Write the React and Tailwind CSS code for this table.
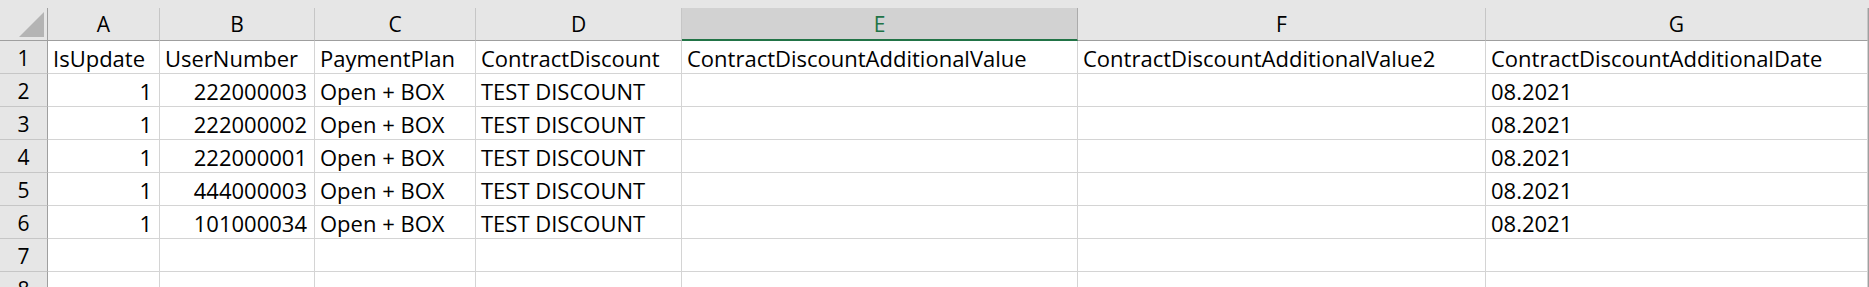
import React from 'react'
import clsx from 'clsx'

const COLS = ['A', 'B', 'C', 'D', 'E', 'F', 'G']
const SELECTED = 'E'

const ROWS = [
  ['IsUpdate', 'UserNumber', 'PaymentPlan', 'ContractDiscount', 'ContractDiscountAdditionalValue', 'ContractDiscountAdditionalValue2', 'ContractDiscountAdditionalDate'],
  [1, 222000003, 'Open + BOX', 'TEST DISCOUNT', '', '', '08.2021'],
  [1, 222000002, 'Open + BOX', 'TEST DISCOUNT', '', '', '08.2021'],
  [1, 222000001, 'Open + BOX', 'TEST DISCOUNT', '', '', '08.2021'],
  [1, 444000003, 'Open + BOX', 'TEST DISCOUNT', '', '', '08.2021'],
  [1, 101000034, 'Open + BOX', 'TEST DISCOUNT', '', '', '08.2021'],
  ['', '', '', '', '', '', ''],
  ['', '', '', '', '', '', ''],
]

const FONT = 'font-["Open_Sans",sans-serif]'

function Corner() {
  return (
    <div className="h-[33px] bg-[#e6e6e6] border-r border-b border-[#9f9f9f] flex items-end justify-end pr-[3px] pb-[3px]">
      <svg width="25" height="25" viewBox="0 0 25 25">
        <polygon points="25,0 25,25 0,25" fill="#b4b4b4" />
      </svg>
    </div>
  )
}

function ColHeader({ label }) {
  const sel = label === SELECTED
  return (
    <div
      className={clsx(
        'h-[33px] flex items-center justify-center text-[21px] border-r',
        sel
          ? 'bg-[#d2d2d2] text-[#217346] border-b-2 border-b-[#217346] border-r-[#ababab]'
          : 'bg-[#e6e6e6] text-black border-b border-b-[#9f9f9f] border-r-[#c6c6c6]'
      )}
    >
      <span className="pt-[2px]">{label}</span>
    </div>
  )
}

function RowHeader({ n }) {
  return (
    <div className="h-[33px] bg-[#e6e6e6] border-r border-r-[#9f9f9f] border-b border-b-[#c6c6c6] flex items-end justify-center pb-[4px] text-[21px] leading-[22px]">
      {n}
    </div>
  )
}

function Cell({ value }) {
  const numeric = typeof value === 'number'
  return (
    <div
      className={clsx(
        'h-[33px] bg-white border-r border-b border-[#d4d4d4] flex items-end pb-[4px] text-[22px] leading-[22px] whitespace-nowrap overflow-hidden',
        numeric ? 'justify-end pr-[7px]' : 'justify-start pl-[5px]'
      )}
    >
      {value}
    </div>
  )
}

export default function App() {
  return (
    <div className={clsx('w-[1869px] h-[287px] overflow-hidden bg-[#e6e6e6] text-black', FONT)}>
      {/* top strip above the column letters */}
      <div className="h-[8px]" />
      <div className="grid grid-cols-[48px_112px_155px_161px_206px_396px_408px_382px_1fr]">
        <Corner />
        {COLS.map(c => <ColHeader key={c} label={c} />)}
        <div className="h-[33px] bg-[#e6e6e6] border-l border-l-[#9f9f9f] border-b border-b-[#9f9f9f]" />

        {ROWS.map((row, i) => (
          <React.Fragment key={i}>
            <RowHeader n={i + 1} />
            {row.map((v, j) => <Cell key={j} value={v} />)}
            <div className="h-[33px] bg-white border-l border-l-[#9f9f9f]" />
          </React.Fragment>
        ))}
      </div>
    </div>
  )
}
